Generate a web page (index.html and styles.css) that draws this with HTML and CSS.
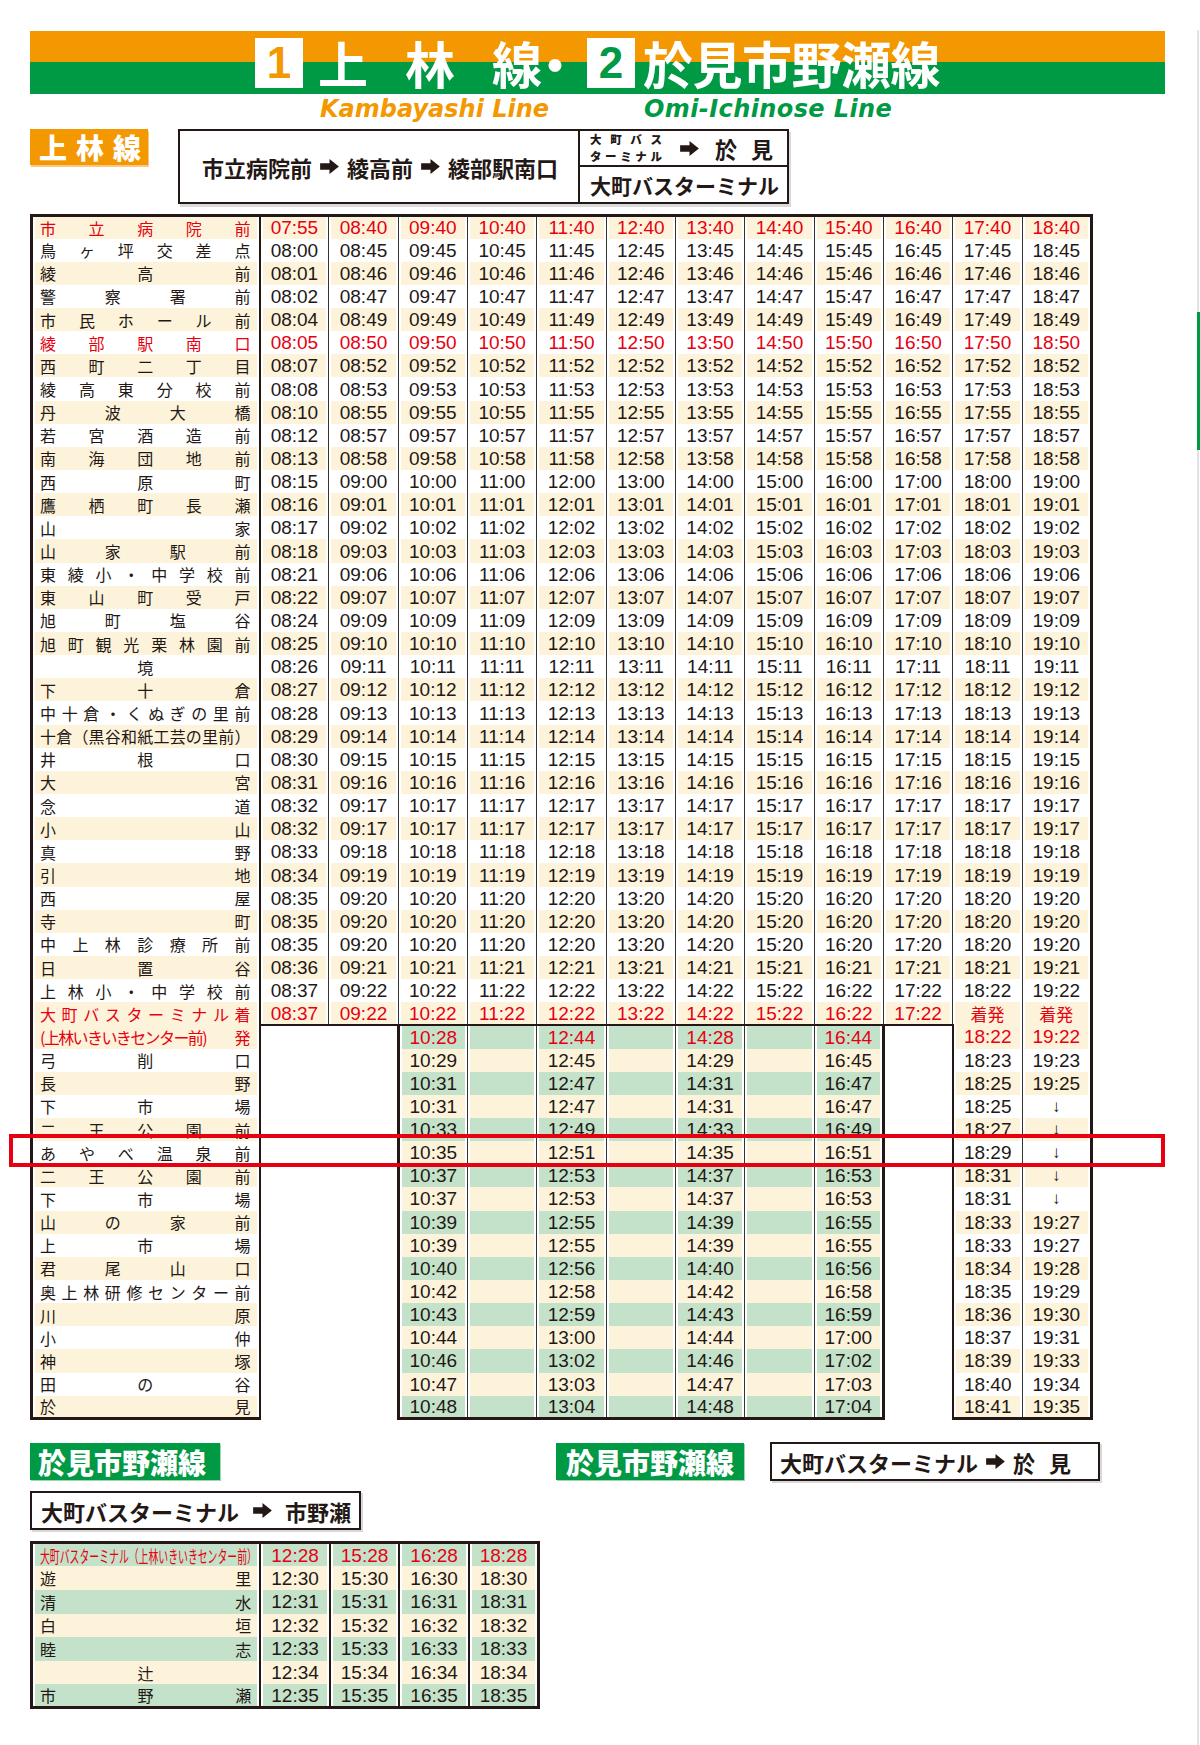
FILE: index.html
```html
<!DOCTYPE html>
<html lang="ja">
<head>
<meta charset="utf-8">
<title>上林線・於見市野瀬線 時刻表</title>
<link rel="stylesheet" href="styles.css">
</head>
<body>
<div class="page">
<main class="sheet">
  <header class="banner">
    <div class="title">
      <span class="num n1">1</span><span class="spread">上林</span><span class="sen">線・</span><span class="num n2">2</span><span class="t2">於見市野瀬線</span>
    </div>
  </header>
  <div class="en"><span class="en1">Kambayashi Line</span><span class="en2">Omi-Ichinose Line</span></div>

  <div class="sec1">
    <div class="label label-or">上林線</div>
    <div class="route">
      <div class="route-main">市立病院前<svg class="arw" viewBox="0 0 20 16" aria-hidden="true"><path d="M0 4.5H10V0L20 8L10 16V11.5H0Z"/></svg>綾高前<svg class="arw" viewBox="0 0 20 16" aria-hidden="true"><path d="M0 4.5H10V0L20 8L10 16V11.5H0Z"/></svg>綾部駅南口</div>
      <div class="route-side">
        <div class="rs-top"><div class="tiny"><div class="tl">大町バス</div><div class="tl">ターミナル</div></div><svg class="arw arw2" viewBox="0 0 20 16" aria-hidden="true"><path d="M0 4.5H10V0L20 8L10 16V11.5H0Z"/></svg><span class="oumi"><span class="gap15">於</span>見</span></div>
        <div class="rs-bot">大町バスターミナル</div>
      </div>
    </div>
  </div>

  <div class="tablewrap">
  <table class="main">
    <colgroup><col class="c0"><col><col><col><col><col><col><col><col><col><col><col><col></colgroup>
    <tr class="o r"><td class="s">市立病院前<td>07:55<td>08:40<td>09:40<td>10:40<td>11:40<td>12:40<td>13:40<td>14:40<td>15:40<td>16:40<td>17:40<td>18:40
    <tr class="e"><td class="s">鳥ヶ坪交差点<td>08:00<td>08:45<td>09:45<td>10:45<td>11:45<td>12:45<td>13:45<td>14:45<td>15:45<td>16:45<td>17:45<td>18:45
    <tr class="o"><td class="s">綾高前<td>08:01<td>08:46<td>09:46<td>10:46<td>11:46<td>12:46<td>13:46<td>14:46<td>15:46<td>16:46<td>17:46<td>18:46
    <tr class="e"><td class="s">警察署前<td>08:02<td>08:47<td>09:47<td>10:47<td>11:47<td>12:47<td>13:47<td>14:47<td>15:47<td>16:47<td>17:47<td>18:47
    <tr class="o"><td class="s">市民ホール前<td>08:04<td>08:49<td>09:49<td>10:49<td>11:49<td>12:49<td>13:49<td>14:49<td>15:49<td>16:49<td>17:49<td>18:49
    <tr class="e r"><td class="s">綾部駅南口<td>08:05<td>08:50<td>09:50<td>10:50<td>11:50<td>12:50<td>13:50<td>14:50<td>15:50<td>16:50<td>17:50<td>18:50
    <tr class="o"><td class="s">西町二丁目<td>08:07<td>08:52<td>09:52<td>10:52<td>11:52<td>12:52<td>13:52<td>14:52<td>15:52<td>16:52<td>17:52<td>18:52
    <tr class="e"><td class="s">綾高東分校前<td>08:08<td>08:53<td>09:53<td>10:53<td>11:53<td>12:53<td>13:53<td>14:53<td>15:53<td>16:53<td>17:53<td>18:53
    <tr class="o"><td class="s">丹波大橋<td>08:10<td>08:55<td>09:55<td>10:55<td>11:55<td>12:55<td>13:55<td>14:55<td>15:55<td>16:55<td>17:55<td>18:55
    <tr class="e"><td class="s">若宮酒造前<td>08:12<td>08:57<td>09:57<td>10:57<td>11:57<td>12:57<td>13:57<td>14:57<td>15:57<td>16:57<td>17:57<td>18:57
    <tr class="o"><td class="s">南海団地前<td>08:13<td>08:58<td>09:58<td>10:58<td>11:58<td>12:58<td>13:58<td>14:58<td>15:58<td>16:58<td>17:58<td>18:58
    <tr class="e"><td class="s">西原町<td>08:15<td>09:00<td>10:00<td>11:00<td>12:00<td>13:00<td>14:00<td>15:00<td>16:00<td>17:00<td>18:00<td>19:00
    <tr class="o"><td class="s">鷹栖町長瀬<td>08:16<td>09:01<td>10:01<td>11:01<td>12:01<td>13:01<td>14:01<td>15:01<td>16:01<td>17:01<td>18:01<td>19:01
    <tr class="e"><td class="s">山家<td>08:17<td>09:02<td>10:02<td>11:02<td>12:02<td>13:02<td>14:02<td>15:02<td>16:02<td>17:02<td>18:02<td>19:02
    <tr class="o"><td class="s">山家駅前<td>08:18<td>09:03<td>10:03<td>11:03<td>12:03<td>13:03<td>14:03<td>15:03<td>16:03<td>17:03<td>18:03<td>19:03
    <tr class="e"><td class="s">東綾小・中学校前<td>08:21<td>09:06<td>10:06<td>11:06<td>12:06<td>13:06<td>14:06<td>15:06<td>16:06<td>17:06<td>18:06<td>19:06
    <tr class="o"><td class="s">東山町受戸<td>08:22<td>09:07<td>10:07<td>11:07<td>12:07<td>13:07<td>14:07<td>15:07<td>16:07<td>17:07<td>18:07<td>19:07
    <tr class="e"><td class="s">旭町塩谷<td>08:24<td>09:09<td>10:09<td>11:09<td>12:09<td>13:09<td>14:09<td>15:09<td>16:09<td>17:09<td>18:09<td>19:09
    <tr class="o"><td class="s">旭町観光栗林園前<td>08:25<td>09:10<td>10:10<td>11:10<td>12:10<td>13:10<td>14:10<td>15:10<td>16:10<td>17:10<td>18:10<td>19:10
    <tr class="e"><td class="s ctr">境<td>08:26<td>09:11<td>10:11<td>11:11<td>12:11<td>13:11<td>14:11<td>15:11<td>16:11<td>17:11<td>18:11<td>19:11
    <tr class="o"><td class="s">下十倉<td>08:27<td>09:12<td>10:12<td>11:12<td>12:12<td>13:12<td>14:12<td>15:12<td>16:12<td>17:12<td>18:12<td>19:12
    <tr class="e"><td class="s">中十倉・くぬぎの里前<td>08:28<td>09:13<td>10:13<td>11:13<td>12:13<td>13:13<td>14:13<td>15:13<td>16:13<td>17:13<td>18:13<td>19:13
    <tr class="o"><td class="s">十倉（黒谷和紙工芸の里前）<td>08:29<td>09:14<td>10:14<td>11:14<td>12:14<td>13:14<td>14:14<td>15:14<td>16:14<td>17:14<td>18:14<td>19:14
    <tr class="e"><td class="s">井根口<td>08:30<td>09:15<td>10:15<td>11:15<td>12:15<td>13:15<td>14:15<td>15:15<td>16:15<td>17:15<td>18:15<td>19:15
    <tr class="o"><td class="s">大宮<td>08:31<td>09:16<td>10:16<td>11:16<td>12:16<td>13:16<td>14:16<td>15:16<td>16:16<td>17:16<td>18:16<td>19:16
    <tr class="e"><td class="s">念道<td>08:32<td>09:17<td>10:17<td>11:17<td>12:17<td>13:17<td>14:17<td>15:17<td>16:17<td>17:17<td>18:17<td>19:17
    <tr class="o"><td class="s">小山<td>08:32<td>09:17<td>10:17<td>11:17<td>12:17<td>13:17<td>14:17<td>15:17<td>16:17<td>17:17<td>18:17<td>19:17
    <tr class="e"><td class="s">真野<td>08:33<td>09:18<td>10:18<td>11:18<td>12:18<td>13:18<td>14:18<td>15:18<td>16:18<td>17:18<td>18:18<td>19:18
    <tr class="o"><td class="s">引地<td>08:34<td>09:19<td>10:19<td>11:19<td>12:19<td>13:19<td>14:19<td>15:19<td>16:19<td>17:19<td>18:19<td>19:19
    <tr class="e"><td class="s">西屋<td>08:35<td>09:20<td>10:20<td>11:20<td>12:20<td>13:20<td>14:20<td>15:20<td>16:20<td>17:20<td>18:20<td>19:20
    <tr class="o"><td class="s">寺町<td>08:35<td>09:20<td>10:20<td>11:20<td>12:20<td>13:20<td>14:20<td>15:20<td>16:20<td>17:20<td>18:20<td>19:20
    <tr class="e"><td class="s">中上林診療所前<td>08:35<td>09:20<td>10:20<td>11:20<td>12:20<td>13:20<td>14:20<td>15:20<td>16:20<td>17:20<td>18:20<td>19:20
    <tr class="o"><td class="s">日置谷<td>08:36<td>09:21<td>10:21<td>11:21<td>12:21<td>13:21<td>14:21<td>15:21<td>16:21<td>17:21<td>18:21<td>19:21
    <tr class="e"><td class="s">上林小・中学校前<td>08:37<td>09:22<td>10:22<td>11:22<td>12:22<td>13:22<td>14:22<td>15:22<td>16:22<td>17:22<td>18:22<td>19:22
    <tr class="o r"><td class="s">大町バスターミナル着<td class="bt">08:37<td class="bt">09:22<td class="bt">10:22<td class="bt">11:22<td class="bt">12:22<td class="bt">13:22<td class="bt">14:22<td class="bt">15:22<td class="bt">16:22<td class="bt">17:22<td class="jp">着発<td class="jp">着発
    <tr class="o r"><td class="s"><div class="split"><span class="tight">(上林いきいきセンター前)</span><span>発</span></div><td class="x"><td class="x"><td class="b bl">10:28<td class="b"><td class="b">12:44<td class="b"><td class="b">14:28<td class="b"><td class="b br">16:44<td class="x"><td class="l2">18:22<td>19:22
    <tr class="e"><td class="s">弓削口<td class="x"><td class="x"><td class="b bl">10:29<td class="b"><td class="b">12:45<td class="b"><td class="b">14:29<td class="b"><td class="b br">16:45<td class="x"><td class="l2">18:23<td>19:23
    <tr class="o"><td class="s">長野<td class="x"><td class="x"><td class="b bl">10:31<td class="b"><td class="b">12:47<td class="b"><td class="b">14:31<td class="b"><td class="b br">16:47<td class="x"><td class="l2">18:25<td>19:25
    <tr class="e"><td class="s">下市場<td class="x"><td class="x"><td class="b bl">10:31<td class="b"><td class="b">12:47<td class="b"><td class="b">14:31<td class="b"><td class="b br">16:47<td class="x"><td class="l2">18:25<td class="down">↓
    <tr class="o"><td class="s">二王公園前<td class="x"><td class="x"><td class="b bl">10:33<td class="b"><td class="b">12:49<td class="b"><td class="b">14:33<td class="b"><td class="b br">16:49<td class="x"><td class="l2">18:27<td class="down">↓
    <tr class="e"><td class="s">あやべ温泉前<td class="x"><td class="x"><td class="b bl">10:35<td class="b"><td class="b">12:51<td class="b"><td class="b">14:35<td class="b"><td class="b br">16:51<td class="x"><td class="l2">18:29<td class="down">↓
    <tr class="o"><td class="s">二王公園前<td class="x"><td class="x"><td class="b bl">10:37<td class="b"><td class="b">12:53<td class="b"><td class="b">14:37<td class="b"><td class="b br">16:53<td class="x"><td class="l2">18:31<td class="down">↓
    <tr class="e"><td class="s">下市場<td class="x"><td class="x"><td class="b bl">10:37<td class="b"><td class="b">12:53<td class="b"><td class="b">14:37<td class="b"><td class="b br">16:53<td class="x"><td class="l2">18:31<td class="down">↓
    <tr class="o"><td class="s">山の家前<td class="x"><td class="x"><td class="b bl">10:39<td class="b"><td class="b">12:55<td class="b"><td class="b">14:39<td class="b"><td class="b br">16:55<td class="x"><td class="l2">18:33<td>19:27
    <tr class="e"><td class="s">上市場<td class="x"><td class="x"><td class="b bl">10:39<td class="b"><td class="b">12:55<td class="b"><td class="b">14:39<td class="b"><td class="b br">16:55<td class="x"><td class="l2">18:33<td>19:27
    <tr class="o"><td class="s">君尾山口<td class="x"><td class="x"><td class="b bl">10:40<td class="b"><td class="b">12:56<td class="b"><td class="b">14:40<td class="b"><td class="b br">16:56<td class="x"><td class="l2">18:34<td>19:28
    <tr class="e"><td class="s">奥上林研修センター前<td class="x"><td class="x"><td class="b bl">10:42<td class="b"><td class="b">12:58<td class="b"><td class="b">14:42<td class="b"><td class="b br">16:58<td class="x"><td class="l2">18:35<td>19:29
    <tr class="o"><td class="s">川原<td class="x"><td class="x"><td class="b bl">10:43<td class="b"><td class="b">12:59<td class="b"><td class="b">14:43<td class="b"><td class="b br">16:59<td class="x"><td class="l2">18:36<td>19:30
    <tr class="e"><td class="s">小仲<td class="x"><td class="x"><td class="b bl">10:44<td class="b"><td class="b">13:00<td class="b"><td class="b">14:44<td class="b"><td class="b br">17:00<td class="x"><td class="l2">18:37<td>19:31
    <tr class="o"><td class="s">神塚<td class="x"><td class="x"><td class="b bl">10:46<td class="b"><td class="b">13:02<td class="b"><td class="b">14:46<td class="b"><td class="b br">17:02<td class="x"><td class="l2">18:39<td>19:33
    <tr class="e"><td class="s">田の谷<td class="x"><td class="x"><td class="b bl">10:47<td class="b"><td class="b">13:03<td class="b"><td class="b">14:47<td class="b"><td class="b br">17:03<td class="x"><td class="l2">18:40<td>19:34
    <tr class="o last"><td class="s">於見<td class="x"><td class="x"><td class="b bl">10:48<td class="b"><td class="b">13:04<td class="b"><td class="b">14:48<td class="b"><td class="b br">17:04<td class="x"><td class="l2">18:41<td>19:35
  </table>
  <div class="hl"></div>
  </div>

  <div class="sec2">
    <div class="label label-gr">於見市野瀬線</div>
    <div class="label label-gr label-gr2">於見市野瀬線</div>
    <div class="box box3">大町バスターミナル<svg class="arw" viewBox="0 0 20 16" aria-hidden="true"><path d="M0 4.5H10V0L20 8L10 16V11.5H0Z"/></svg><span class="oumi2"><span class="gap15">於</span>見</span></div>
  </div>
  <div class="box box4">大町バスターミナル<svg class="arw arw4" viewBox="0 0 20 16" aria-hidden="true"><path d="M0 4.5H10V0L20 8L10 16V11.5H0Z"/></svg>市野瀬</div>

  <table class="sub">
    <colgroup><col class="c0"><col><col><col><col></colgroup>
    <tr class="g r"><td class="s hdr"><span class="cond">大町バスターミナル（上林いきいきセンター前）</span><td>12:28<td>15:28<td>16:28<td>18:28
    <tr class="c"><td class="s">遊里<td>12:30<td>15:30<td>16:30<td>18:30
    <tr class="g"><td class="s">清水<td>12:31<td>15:31<td>16:31<td>18:31
    <tr class="c"><td class="s">白垣<td>12:32<td>15:32<td>16:32<td>18:32
    <tr class="g"><td class="s">睦志<td>12:33<td>15:33<td>16:33<td>18:33
    <tr class="c"><td class="s ctr">辻<td>12:34<td>15:34<td>16:34<td>18:34
    <tr class="g"><td class="s">市野瀬<td>12:35<td>15:35<td>16:35<td>18:35
  </table>
</main>
<div class="edge"><div class="edge-a"></div><div class="edge-b"></div><div class="edge-c"></div></div>
</div>
</body>
</html>
```

FILE: styles.css
```css
* { box-sizing: border-box; }
html, body { margin: 0; padding: 0; background: #fff; }
body {
  font-family: "Noto Sans CJK JP", "Liberation Sans", sans-serif;
  color: #231815;
}
.page { display: flex; width: 1200px; min-height: 1745px; }
.sheet { width: 1196px; padding: 31px 0 0 30px; }

/* right page edge */
.edge { width: 4px; display: flex; flex-direction: column; padding-top: 30px; }
.edge-a { height: 282px; width: 2px; margin-left: 1px; background: #e3e3e3; }
.edge-b { height: 138px; width: 3px; margin-left: 1px; background: #009944; }
.edge-c { flex: 1; width: 2px; margin-left: 1px; background: #e3e3e3; }

/* banner */
.banner {
  width: 1135px; height: 63px;
  background: linear-gradient(to bottom, #f39800 0, #f39800 31px, #009944 31px, #009944 100%);
  display: flex; justify-content: center; align-items: center;
}
.title {
  display: flex; align-items: center;
  color: #fff; font-weight: 700; font-size: 50px; line-height: 50px;
  margin-top: -2px;
}
.num {
  width: 48px; height: 50px; background: #fff;
  display: flex; align-items: center; justify-content: center;
  font-family: "Liberation Sans", sans-serif; font-weight: 700; font-size: 44px;
  margin-right: 15px; margin-top: 2px;
}
.n1 { color: #f39800; }
.n2 { color: #009944; margin-right: 8px; }
.spread { letter-spacing: 37px; }
.sen { letter-spacing: -12px; margin-right: 19px; }
.t2 { letter-spacing: -0.5px; }

.en {
  display: flex; height: 35px; padding-left: 290px; padding-top: 2px;
  font-family: "DejaVu Sans", sans-serif; font-weight: 700; font-style: italic;
  font-size: 24px; line-height: 26px;
}
.en1 { width: 324px; color: #f39800; }
.en2 { color: #009944; letter-spacing: 0.4px; }

/* section 1 */
.sec1 { display: flex; align-items: flex-start; height: 75px; margin-bottom: 10px; }
.label { display: flex; align-items: center; color: #fff; font-weight: 900; white-space: nowrap; }
.label-or {
  width: 118px; height: 36px; background: #f39800;
  font-size: 28px; letter-spacing: 9px; padding-left: 9px;
  box-shadow: 1px 2px 0 #f7c984;
}
.route {
  margin-left: 30px; width: 611px; height: 75px;
  border: 2px solid #231815; display: flex; font-weight: 700;
  box-shadow: 2px 3px 0 #dadada;
}
.route-main {
  width: 400px; border-right: 2px solid #231815;
  display: flex; align-items: center; justify-content: center;
  font-size: 22px; padding-left: 2px; white-space: nowrap;
}
.arw { width: 19px; height: 15px; fill: #231815; margin: 0 8px; flex: none; }
.route-side { flex: 1; display: flex; flex-direction: column; }
.rs-top {
  height: 36px; border-bottom: 2px solid #231815;
  display: flex; align-items: center; padding-left: 10px; white-space: nowrap;
}
.tiny {
  width: 72px; flex: none; display: flex; flex-direction: column;
  font-size: 11.5px; font-weight: 900;
}
.tl {
  line-height: 16.6px;
  text-align: justify; text-align-last: justify; white-space: normal;
}
.arw2 { margin: 0 16px 0 18px; }
.oumi { font-size: 22px; white-space: nowrap; }
.gap15 { margin-right: 14px; }
.rs-bot { flex: 1; display: flex; align-items: center; padding-left: 10px; font-size: 21px; white-space: nowrap; }

/* main table */
.tablewrap { position: relative; width: 1060px; }
.main {
  border-collapse: collapse; table-layout: fixed; width: 1060px;
}
.main col, .sub col { width: 69.33px; }
.main col.c0, .sub col.c0 { width: 228px; }
.main tr { height: 23.15px; }
.main td {
  padding: 0; line-height: 1; text-align: center;
  font-family: "Liberation Sans", sans-serif; font-size: 19px;
  border-left: 1px solid #333; border-right: 1px solid #333;
  box-shadow: inset 2px 0 0 #fff, inset -2px 0 0 #fff;
}
.main tr.o td { background: #fdf3da; }
.main tr.e td { background: #fff; }
.main tr:first-child td { border-top: 3px solid #231815; }
.main td.s {
  border-left: 3px solid #231815; border-right: 2px solid #231815;
  padding: 0 8px 0 7px; font-family: "Noto Sans CJK JP", sans-serif; font-size: 16px;
}
.main td:last-child { border-right: 3px solid #231815; }
.main td.bt { border-bottom: 2px solid #231815; }
.main td.bl { border-left: 3px solid #231815; }
.main td.br { border-right: 3px solid #231815; }
.main td.l2 { border-left: 2px solid #231815; }
.main tr.o td.b { background: #c4e2c9; }
.main tr.e td.b { background: #fdf3da; }
.main td.x { border-left: 0 none; border-right: 0 none; background: #fff; box-shadow: none; }
.main tr.o td.x { background: #fff; }
.main tr.last td { border-bottom: 3px solid #231815; }
.main tr.last td.x { border-bottom: 0 none; }

td.s { text-align: justify; text-align-last: justify; }
td.s.ctr { text-align: center; text-align-last: center; }
.main td.jp { font-family: "Noto Sans CJK JP", sans-serif; font-size: 17px; }
.main td.down { font-size: 17px; }
.split { display: flex; justify-content: space-between; text-align-last: auto; }
.tight { letter-spacing: -1.6px; }

tr.r td { color: #e60012; }

.hl {
  position: absolute; left: -21px; top: 920px;
  width: 1156px; height: 33px;
  border: 4px solid #e60012;
  pointer-events: none;
}

/* section 2 */
.sec2 { display: flex; align-items: center; margin-top: 22px; }
.label-gr {
  height: 37px; width: 190px; background: #009944;
  font-size: 28px; padding-left: 8px;
  box-shadow: 1px 1px 0 #9fd3b1;
}
.label-gr2 { margin-left: 336px; width: 188px; padding-left: 10px; }
.box {
  border: 2px solid #231815; height: 39px;
  display: flex; align-items: center;
  font-weight: 700; font-size: 22px; white-space: nowrap;
  box-shadow: 2px 2px 0 #d8d8d8;
}
.box3 { margin-left: 26px; width: 330px; padding-left: 8px; }
.oumi2 { white-space: nowrap; }
.box4 { margin-top: 10px; width: 331px; padding-left: 9px; }
.arw4 { margin: 0 13px 0 14px; }

/* sub table */
.sub {
  margin-top: 11px;
  border-collapse: collapse; table-layout: fixed; width: 510px;
}
.sub tr { height: 23.6px; }
.sub td {
  padding: 0; line-height: 1; text-align: center;
  font-family: "Liberation Sans", sans-serif; font-size: 19px;
  border-left: 2px solid #231815; border-right: 2px solid #231815;
  box-shadow: inset 2px 0 0 #fff, inset -2px 0 0 #fff;
}
.sub tr:first-child td { border-top: 3px solid #231815; }
.sub tr:last-child td { border-bottom: 3px solid #231815; }
.sub td.s {
  border-left: 3px solid #231815;
  padding: 0 8px 0 7px; font-family: "Noto Sans CJK JP", sans-serif; font-size: 16px;
  text-align: justify; text-align-last: justify;
}
.sub td.s.ctr { text-align: center; text-align-last: center; }
.sub td:last-child { border-right: 3px solid #231815; }
.sub tr.g td { background: #c4e2c9; }
.sub tr.c td { background: #fdf3da; }
.sub td.hdr { text-align: left; text-align-last: left; white-space: nowrap; overflow: visible; }
.cond {
  display: inline-block; font-size: 17px;
  transform: scaleX(0.58); transform-origin: left center;
}
```
